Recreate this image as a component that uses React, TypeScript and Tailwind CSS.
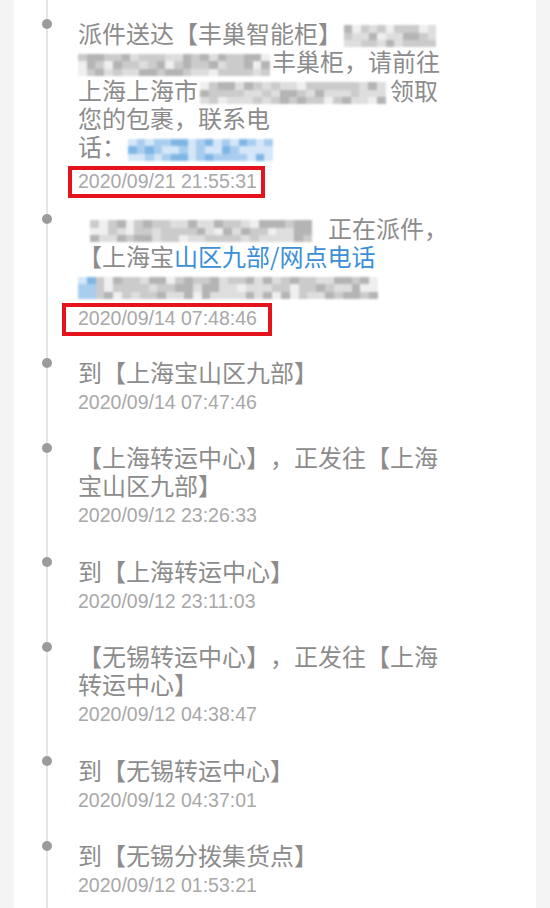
import React from 'react';

type Tone = 'gray' | 'blue' | 'mixed';

// pixelated + blurred block standing in for the redacted text
const Mosaic: React.FC<{ w: number; seed: number; tone?: Tone; className?: string }> = ({
  w,
  seed,
  tone = 'gray',
  className = '',
}) => {
  const cols = Math.ceil(w / 9);
  const rows = 3;
  let s = seed * 9301 + 49297;
  const rnd = () => {
    s = (s * 9301 + 49297) % 233280;
    return s / 233280;
  };
  const cells: string[] = [];
  for (let r = 0; r < rows; r++) {
    for (let c = 0; c < cols; c++) {
      const v = rnd();
      const blue = tone === 'blue' || (tone === 'mixed' && c < 2);
      if (blue) {
        cells.push(v < 0.3 ? '#7fb6e6' : v < 0.7 ? '#a9cdef' : '#d4e6f7');
      } else {
        cells.push(v < 0.25 ? '#b4b4b4' : v < 0.6 ? '#cbcbcb' : v < 0.88 ? '#dedede' : '#efefef');
      }
    }
  }
  return (
    <span
      className={`inline-grid align-middle blur-[1.3px] ${className}`}
      style={{ width: w, height: 22, gridTemplateColumns: `repeat(${cols}, 1fr)` }}
    >
      {cells.map((c, i) => (
        <span key={i} style={{ background: c }} />
      ))}
    </span>
  );
};

const RedBox: React.FC<{ className: string }> = ({ className }) => (
  <span className={`absolute border-[4px] border-[#e5141c] pointer-events-none ${className}`} />
);

interface Item {
  body: React.ReactNode;
  time: string;
  tsClass?: string;
  itemClass?: string;
  box?: string;
}

const blue = 'text-[#3a8fd8]';

const items: Item[] = [
  {
    body: (
      <>
        <div className="whitespace-nowrap">
          派件送达【丰巢智能柜】
          <Mosaic w={92} seed={3} className="ml-[2px]" />
        </div>
        <div className="whitespace-nowrap">
          <Mosaic w={192} seed={7} className="mr-[2px]" />
          丰巢柜，请前往
        </div>
        <div className="whitespace-nowrap">
          上海上海市
          <Mosaic w={186} seed={11} className="ml-[2px] mr-[4px]" />
          领取
        </div>
        <div className="whitespace-nowrap">您的包裹，联系电</div>
        <div className="whitespace-nowrap">
          话：
          <Mosaic w={145} seed={5} tone="blue" className="ml-[2px]" />
        </div>
      </>
    ),
    time: '2020/09/21 21:55:31',
    tsClass: 'mt-[6px]',
    itemClass: 'pb-[19px]',
    box: 'left-[-10px] top-[-1px] w-[197px] h-[32px]',
  },
  {
    body: (
      <>
        <div className="whitespace-nowrap">
          <Mosaic w={222} seed={13} className="ml-[12px] mr-[16px]" />
          正在派件，
        </div>
        <div className="whitespace-nowrap">
          【上海宝<span className={blue}>山区九部/网点电话</span>
        </div>
        <div className="whitespace-nowrap">
          <Mosaic w={300} seed={17} tone="mixed" />
        </div>
      </>
    ),
    time: '2020/09/14 07:48:46',
    tsClass: 'mt-[5px]',
    itemClass: 'pb-[26px]',
    box: 'left-[-16px] top-[-1px] w-[210px] h-[33px]',
  },
  { body: '到【上海宝山区九部】', time: '2020/09/14 07:47:46' },
  { body: '【上海转运中心】，正发往【上海宝山区九部】', time: '2020/09/12 23:26:33' },
  { body: '到【上海转运中心】', time: '2020/09/12 23:11:03' },
  { body: '【无锡转运中心】，正发往【上海转运中心】', time: '2020/09/12 04:38:47' },
  { body: '到【无锡转运中心】', time: '2020/09/12 04:37:01' },
  { body: '到【无锡分拨集货点】', time: '2020/09/12 01:53:21' },
];

export default function App() {
  return (
    <div className="h-[908px] overflow-hidden bg-[#f4f4f4] px-[14px] font-['Noto_Sans_CJK_SC',sans-serif]">
      <div className="relative h-full bg-white">
        {/* timeline rail */}
        <div className="absolute left-[32px] top-0 bottom-0 w-[2px] bg-[#e6e6e6]" />

        <div className="pt-[19px] pl-[64px]">
          {items.map((item, i) => (
            <div key={i} className={`relative ${item.itemClass ?? 'pb-[27.5px]'}`}>
              <span className="absolute left-[-36px] top-0 w-[10px] h-[10px] rounded-full bg-[#9b9b9b]" />
              <div className="w-[368px] text-[24px] leading-[28px] text-[#8c8c8c] [text-spacing-trim:space-all]">
                {item.body}
              </div>
              <div
                className={`relative text-[19.5px] leading-[28px] text-[#a8a8a8] font-['Liberation_Sans',sans-serif] ${
                  item.tsClass ?? 'mt-[2px]'
                }`}
              >
                {item.time}
                {item.box && <RedBox className={item.box} />}
              </div>
            </div>
          ))}
        </div>
      </div>
    </div>
  );
}
